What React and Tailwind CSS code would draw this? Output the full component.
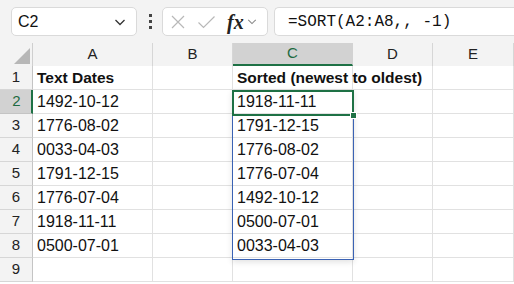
import React from "react";

const COLS = ["A", "B", "C", "D", "E"];
const COL_W = ["w-[120px]", "w-[80px]", "w-[120px]", "w-[80px]", "w-[81px]"];

const DATA = [
  ["Text Dates", "", "Sorted (newest to oldest)", "", ""],
  ["1492-10-12", "", "1918-11-11", "", ""],
  ["1776-08-02", "", "1791-12-15", "", ""],
  ["0033-04-03", "", "1776-08-02", "", ""],
  ["1791-12-15", "", "1776-07-04", "", ""],
  ["1776-07-04", "", "1492-10-12", "", ""],
  ["1918-11-11", "", "0500-07-01", "", ""],
  ["0500-07-01", "", "0033-04-03", "", ""],
  ["", "", "", "", ""],
];

function Chevron({ className }) {
  return (
    <svg viewBox="0 0 12 8" className={className} fill="none" stroke="currentColor" strokeWidth="1.3">
      <path d="M1.5 2 L6 6.5 L10.5 2" />
    </svg>
  );
}

function Toolbar() {
  return (
    <div className="flex h-[43px] items-center bg-[#f3f3f3] pl-[11px]">
      <div className="flex h-[29px] w-[126px] items-center justify-between rounded-[5px] border border-[#dadada] bg-white pl-[6px] pr-[10px]">
        <span className="text-[16px] text-[#111]">C2</span>
        <Chevron className="h-[8px] w-[12px] text-[#333]" />
      </div>
      <div className="ml-[11px] flex w-[5px] flex-col items-center gap-[3px]">
        <span className="h-[3px] w-[3px] bg-[#444]" />
        <span className="h-[3px] w-[3px] bg-[#444]" />
        <span className="h-[3px] w-[3px] bg-[#444]" />
      </div>
      <div className="ml-[9px] flex h-[29px] w-[106px] items-center rounded-[5px] border border-[#dadada] bg-white pl-[7px]">
        <svg viewBox="0 0 16 16" className="h-[16px] w-[16px] text-[#b8b8b8]" fill="none" stroke="currentColor" strokeWidth="1.2">
          <path d="M2 2 L14 14 M14 2 L2 14" />
        </svg>
        <svg viewBox="0 0 18 16" className="ml-[11px] h-[16px] w-[19px] text-[#b8b8b8]" fill="none" stroke="currentColor" strokeWidth="1.2">
          <path d="M1 8.5 L6 13.5 L17 2.5" />
        </svg>
        <span className="ml-[11px] font-['Liberation_Serif'] text-[20px] font-semibold italic leading-none text-[#222]">fx</span>
        <Chevron className="ml-[3px] h-[7px] w-[10px] text-[#888]" />
      </div>
      <div className="ml-[6px] flex h-[29px] flex-1 items-center rounded-l-[5px] border border-r-0 border-[#dadada] bg-white pl-[13px]">
        <span className="font-['Liberation_Mono'] text-[16px] text-[#111]">=SORT(A2:A8,, -1)</span>
      </div>
    </div>
  );
}

export default function App() {
  return (
    <div className="h-[284px] w-[514px] overflow-hidden bg-white font-['Liberation_Sans',Arial,sans-serif]">
      <Toolbar />
      <div className="relative">
        <div className="flex h-[23px] bg-[#f3f3f3]">
          <div className="relative w-[33px] border-r border-[#cfcfcf]">
            <svg viewBox="0 0 16 16" className="absolute left-[14px] top-[5px] h-[16px] w-[16px]">
              <path d="M16 0 L16 16 L0 16 Z" fill="#b7b7b7" />
            </svg>
          </div>
          {COLS.map((c, i) => (
            <div
              key={c}
              className={`${COL_W[i]} flex items-center justify-center border-r text-[15px] ${
                c === "C"
                  ? "border-[#d2d2d2] border-b-2 border-b-[#1e7145] bg-[#d2d2d2] text-[#1e6b41]"
                  : "border-[#d6d6d6] text-[#222]"
              }`}
            >
              {c}
            </div>
          ))}
        </div>
        {DATA.map((row, r) => (
          <div key={r} className="flex h-[24px]">
            <div
              className={`flex w-[33px] items-center justify-center border-b text-[15px] ${
                r === 1
                  ? "border-r-2 border-b-[#c4c4c4] border-r-[#1e7145] bg-[#d2d2d2] pl-[2px] text-[#1e6b41]"
                  : "border-r border-b-[#d6d6d6] border-r-[#c4c4c4] bg-[#f3f3f3] text-[#222]"
              }`}
            >
              {r + 1}
            </div>
            {row.map((v, c) => (
              <div
                key={c}
                className={`${COL_W[c]} flex items-center overflow-visible whitespace-nowrap border-b border-r border-[#e1e1e1] pl-[4px] text-[#111] ${
                  r === 0 ? "text-[15.5px] font-bold" : "text-[16px]"
                }`}
              >
                {v}
              </div>
            ))}
          </div>
        ))}
        <div className="pointer-events-none absolute left-[232px] top-[47px] h-[170px] w-[122px] border border-[#3a62b4] shadow-[0_2px_6px_rgba(0,0,0,0.12)]" />
        <div className="pointer-events-none absolute left-[232px] top-[47px] h-[26px] w-[122px] border-2 border-[#1e7145]" />
        <div className="pointer-events-none absolute left-[350px] top-[69px] h-[7px] w-[7px] border border-white bg-[#1e7145]" />
      </div>
    </div>
  );
}
